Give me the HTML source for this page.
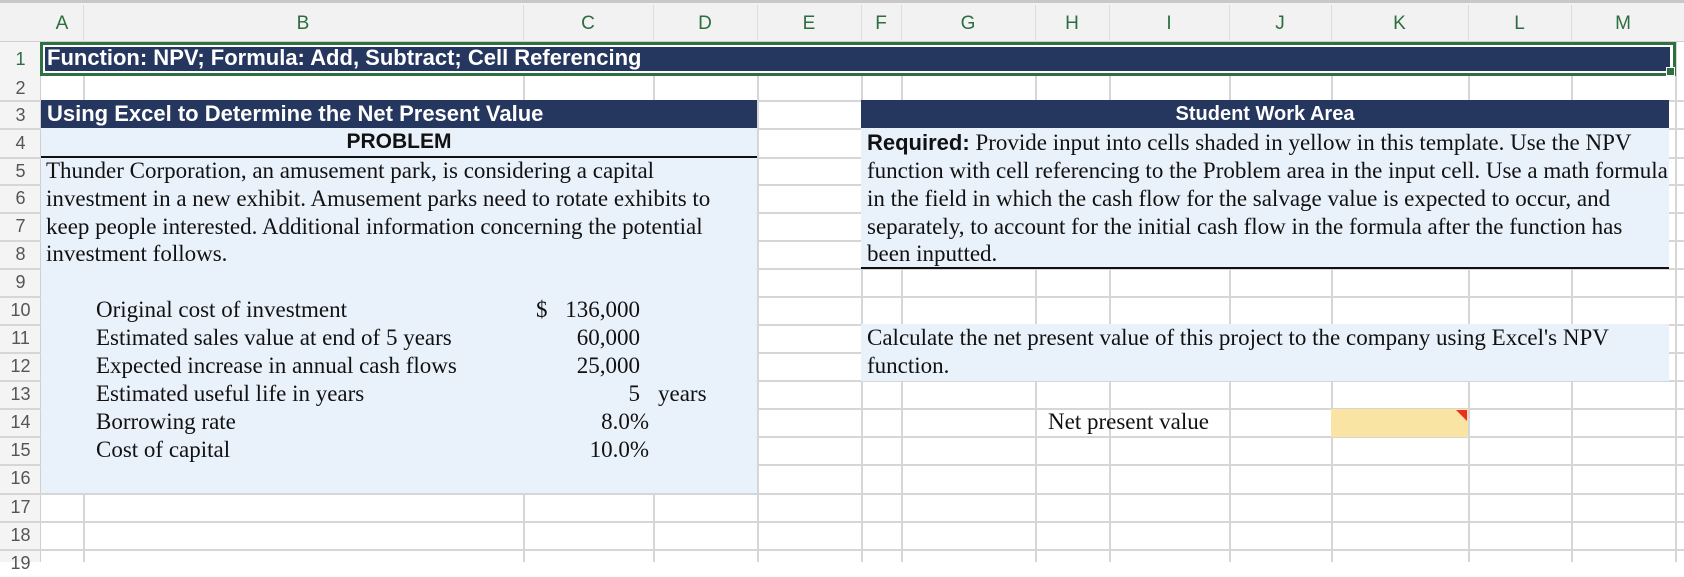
<!DOCTYPE html>
<html><head><meta charset="utf-8"><style>
*{margin:0;padding:0;box-sizing:border-box}
body{width:1684px;height:562px;overflow:hidden;background:#fff;position:relative;font-family:"Liberation Serif",serif}
.a{position:absolute}
.v{position:absolute;width:2px;background:#d6d6d6;top:42px;height:520px}
.h{position:absolute;height:2px;background:#d6d6d6;left:0;width:1684px}
.ch{position:absolute;top:5px;height:37px;line-height:37px;text-align:center;font-family:"Liberation Sans",sans-serif;font-size:19px;color:#2c6e3f}
.rh{position:absolute;left:0;width:41px;text-align:center;font-family:"Liberation Sans",sans-serif;font-size:18px;color:#555;height:28px;line-height:28px}
.t{position:absolute;white-space:nowrap;font-size:23px;color:#111;line-height:28px}
.r{text-align:right}
</style></head><body>
<div class="a" style="left:0;top:0;width:1684px;height:3px;background:#c8c8c8"></div>
<div class="a" style="left:0;top:3px;width:1684px;height:39px;background:#f2f2f2;border-bottom:1px solid #cfcfcf"></div>
<div class="a" style="left:0;top:42px;width:41px;height:520px;background:#f4f4f4;border-right:1px solid #cfcfcf"></div>
<div class="v" style="left:83px"></div><div class="v" style="left:523px"></div><div class="v" style="left:653px"></div><div class="v" style="left:757px"></div><div class="v" style="left:861px"></div><div class="v" style="left:901px"></div><div class="v" style="left:1035px"></div><div class="v" style="left:1109px"></div><div class="v" style="left:1229px"></div><div class="v" style="left:1331px"></div><div class="v" style="left:1468px"></div><div class="v" style="left:1571px"></div><div class="v" style="left:1675px"></div>
<div class="a" style="left:83px;top:5px;width:1px;height:37px;background:#dcdcdc"></div><div class="a" style="left:523px;top:5px;width:1px;height:37px;background:#dcdcdc"></div><div class="a" style="left:653px;top:5px;width:1px;height:37px;background:#dcdcdc"></div><div class="a" style="left:757px;top:5px;width:1px;height:37px;background:#dcdcdc"></div><div class="a" style="left:861px;top:5px;width:1px;height:37px;background:#dcdcdc"></div><div class="a" style="left:901px;top:5px;width:1px;height:37px;background:#dcdcdc"></div><div class="a" style="left:1035px;top:5px;width:1px;height:37px;background:#dcdcdc"></div><div class="a" style="left:1109px;top:5px;width:1px;height:37px;background:#dcdcdc"></div><div class="a" style="left:1229px;top:5px;width:1px;height:37px;background:#dcdcdc"></div><div class="a" style="left:1331px;top:5px;width:1px;height:37px;background:#dcdcdc"></div><div class="a" style="left:1468px;top:5px;width:1px;height:37px;background:#dcdcdc"></div><div class="a" style="left:1571px;top:5px;width:1px;height:37px;background:#dcdcdc"></div>
<div class="h" style="top:100px"></div><div class="h" style="top:128px"></div><div class="h" style="top:157px"></div><div class="h" style="top:184px"></div><div class="h" style="top:212px"></div><div class="h" style="top:240px"></div><div class="h" style="top:268px"></div><div class="h" style="top:296px"></div><div class="h" style="top:324px"></div><div class="h" style="top:352px"></div><div class="h" style="top:380px"></div><div class="h" style="top:408px"></div><div class="h" style="top:436px"></div><div class="h" style="top:464px"></div><div class="h" style="top:493px"></div><div class="h" style="top:521px"></div><div class="h" style="top:549px"></div>
<div class="ch" style="left:41px;width:42px">A</div><div class="ch" style="left:83px;width:440px">B</div><div class="ch" style="left:523px;width:130px">C</div><div class="ch" style="left:653px;width:104px">D</div><div class="ch" style="left:757px;width:104px">E</div><div class="ch" style="left:861px;width:40px">F</div><div class="ch" style="left:901px;width:134px">G</div><div class="ch" style="left:1035px;width:74px">H</div><div class="ch" style="left:1109px;width:120px">I</div><div class="ch" style="left:1229px;width:102px">J</div><div class="ch" style="left:1331px;width:137px">K</div><div class="ch" style="left:1468px;width:103px">L</div><div class="ch" style="left:1571px;width:104px">M</div>
<div class="rh" style="top:45px;color:#2c6e3f">1</div><div class="rh" style="top:74px">2</div><div class="rh" style="top:101px">3</div><div class="rh" style="top:129px">4</div><div class="rh" style="top:157px">5</div><div class="rh" style="top:184px">6</div><div class="rh" style="top:212px">7</div><div class="rh" style="top:240px">8</div><div class="rh" style="top:268px">9</div><div class="rh" style="top:296px">10</div><div class="rh" style="top:324px">11</div><div class="rh" style="top:352px">12</div><div class="rh" style="top:380px">13</div><div class="rh" style="top:408px">14</div><div class="rh" style="top:436px">15</div><div class="rh" style="top:464px">16</div><div class="rh" style="top:493px">17</div><div class="rh" style="top:521px">18</div><div class="rh" style="top:549px">19</div>
<div class="a" style="left:40px;top:42px;width:1636px;height:34px;border:3px solid #2f6f42;background:#fff"></div>
<div class="a" style="left:45px;top:47px;width:1625px;height:24px;background:#25365f"></div>
<div class="a" style="left:1666px;top:67px;width:9px;height:9px;background:#2f6f42;border:1px solid #fff"></div>
<div class="a" style="left:47px;top:44px;line-height:28px;font-family:'Liberation Sans',sans-serif;font-weight:bold;font-size:22px;color:#fff;white-space:nowrap">Function: NPV; Formula: Add, Subtract; Cell Referencing</div>
<div class="a" style="left:41px;top:100px;width:716px;height:28px;background:#25365f"></div>
<div class="a" style="left:47px;top:100px;line-height:28px;font-family:'Liberation Sans',sans-serif;font-weight:bold;font-size:22px;color:#fff;white-space:nowrap">Using Excel to Determine the Net Present Value</div>
<div class="a" style="left:41px;top:128px;width:716px;height:365px;background:#e9f1fb"></div>
<div class="a" style="left:41px;top:156px;width:716px;height:2px;background:#111"></div>
<div class="a" style="left:41px;top:128px;width:716px;text-align:center;line-height:28px;font-family:'Liberation Sans',sans-serif;font-weight:bold;font-size:21px;color:#111">PROBLEM</div>
<div class="t" style="left:46px;top:157px">Thunder Corporation, an amusement park, is considering a capital</div>
<div class="t" style="left:46px;top:185px">investment in a new exhibit. Amusement parks need to rotate exhibits to</div>
<div class="t" style="left:46px;top:213px">keep people interested. Additional information concerning the potential</div>
<div class="t" style="left:46px;top:240px">investment follows.</div>
<div class="t" style="left:96px;top:296px">Original cost of investment</div>
<div class="t" style="left:96px;top:324px">Estimated sales value at end of 5 years</div>
<div class="t" style="left:96px;top:352px">Expected increase in annual cash flows</div>
<div class="t" style="left:96px;top:380px">Estimated useful life in years</div>
<div class="t" style="left:96px;top:408px">Borrowing rate</div>
<div class="t" style="left:96px;top:436px">Cost of capital</div>
<div class="t" style="left:536px;top:296px">$</div>
<div class="t r" style="left:540px;width:100px;top:296px">136,000</div>
<div class="t r" style="left:540px;width:100px;top:324px">60,000</div>
<div class="t r" style="left:540px;width:100px;top:352px">25,000</div>
<div class="t r" style="left:540px;width:100px;top:380px">5</div>
<div class="t" style="left:658px;top:380px">years</div>
<div class="t r" style="left:540px;width:109px;top:408px">8.0%</div>
<div class="t r" style="left:540px;width:109px;top:436px">10.0%</div>
<div class="a" style="left:861px;top:100px;width:808px;height:28px;background:#25365f"></div>
<div class="a" style="left:861px;top:100px;width:808px;text-align:center;line-height:28px;font-family:'Liberation Sans',sans-serif;font-weight:bold;font-size:20px;color:#fff">Student Work Area</div>
<div class="a" style="left:861px;top:128px;width:808px;height:140px;background:#e9f1fb"></div>
<div class="a" style="left:861px;top:267px;width:808px;height:2px;background:#111"></div>
<div class="t" style="left:867px;top:129px"><b style="font-family:'Liberation Sans',sans-serif;font-size:22px">Required:</b> Provide input into cells shaded in yellow in this template. Use the NPV</div>
<div class="t" style="left:867px;top:157px">function with cell referencing to the Problem area in the input cell. Use a math formula</div>
<div class="t" style="left:867px;top:185px">in the field in which the cash flow for the salvage value is expected to occur, and</div>
<div class="t" style="left:867px;top:213px">separately, to account for the initial cash flow in the formula after the function has</div>
<div class="t" style="left:867px;top:240px">been inputted.</div>
<div class="a" style="left:861px;top:324px;width:808px;height:57px;background:#e9f1fb"></div>
<div class="t" style="left:867px;top:324px">Calculate the net present value of this project to the company using Excel's NPV</div>
<div class="t" style="left:867px;top:352px">function.</div>
<div class="t" style="left:1048px;top:408px">Net present value</div>
<div class="a" style="left:1331px;top:409px;width:137px;height:28px;background:#fae4a4"></div>
<svg class="a" style="left:1456px;top:410px" width="11" height="11"><polygon points="0,0 11,0 11,11" fill="#e8321e"/></svg>
</body></html>
